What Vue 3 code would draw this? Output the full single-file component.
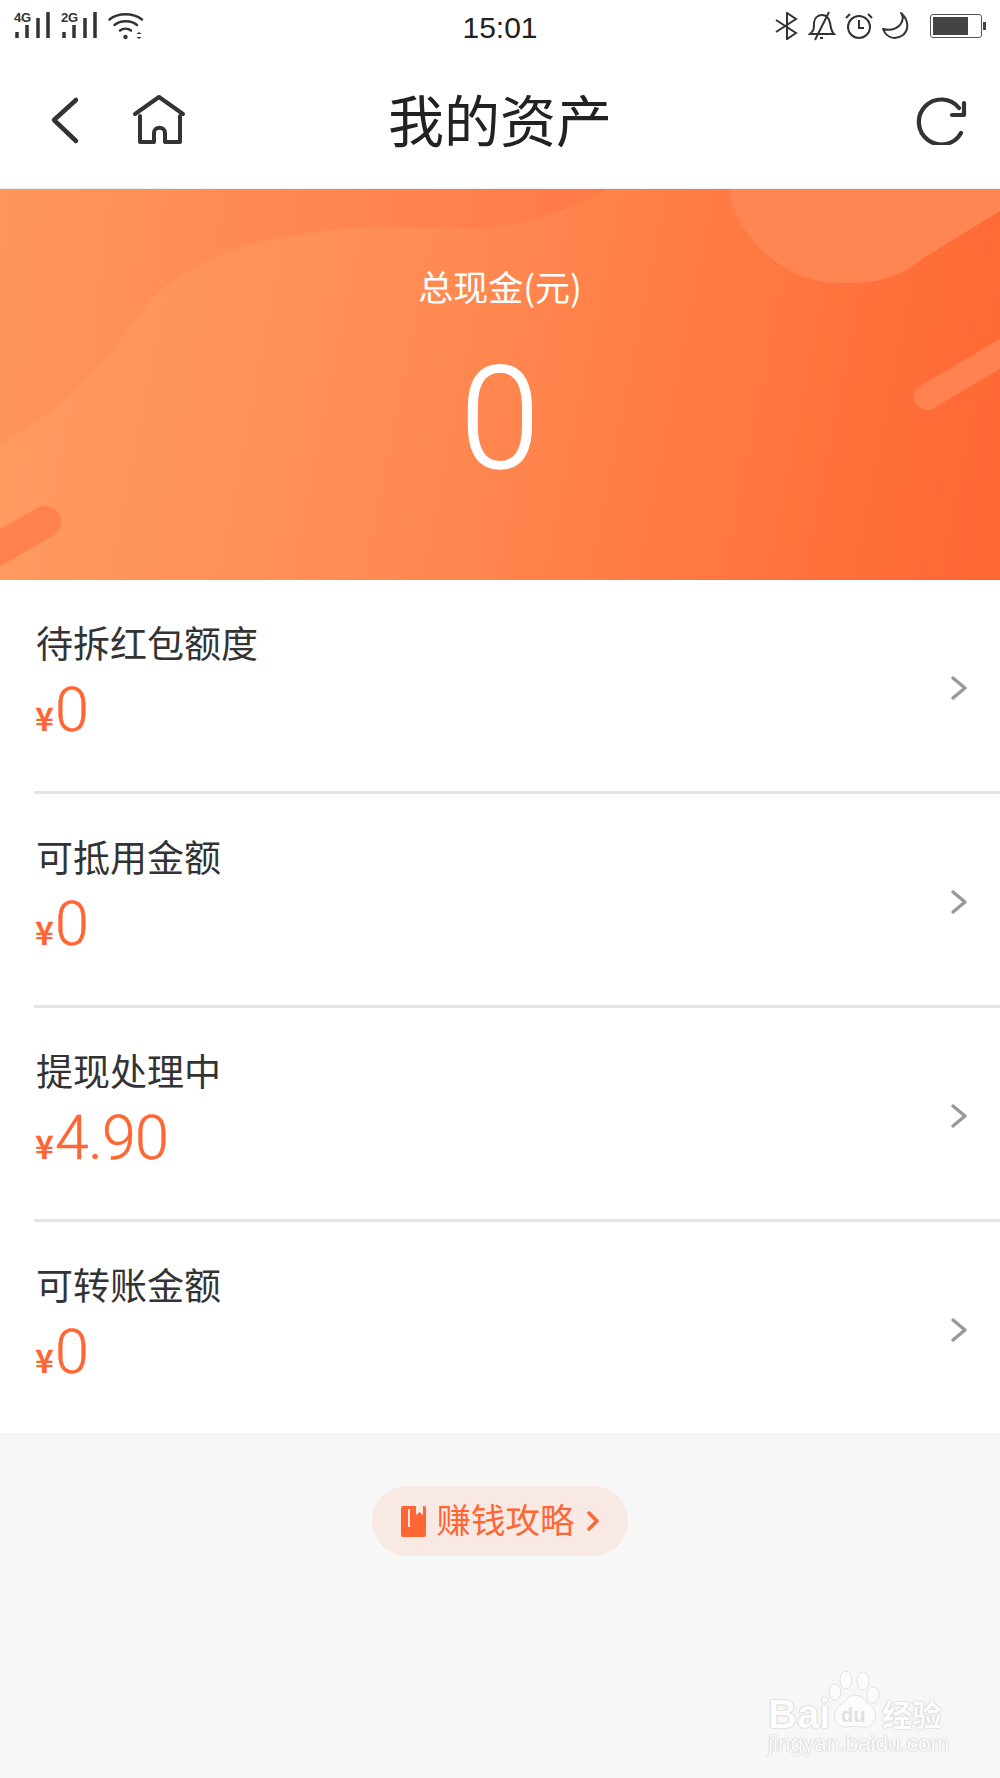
<script setup>
const rows = [
  { label: '待拆红包额度', value: '0' },
  { label: '可抵用金额', value: '0' },
  { label: '提现处理中', value: '4.90' },
  { label: '可转账金额', value: '0' }
]
</script>

<template>
  <div class="page">
    <div class="status">
      <div class="status-left">
        <div class="signal"><span class="net">4G</span><svg width="36" height="26" viewBox="0 0 36 26"><path d="M3 20v6M13 13v13M24 6v20M34 0v26" class="bars" /></svg></div>
        <div class="signal"><span class="net">2G</span><svg width="36" height="26" viewBox="0 0 36 26"><path d="M3 20v6M13 13v13M24 6v20M34 0v26" class="bars" /></svg></div>
        <svg class="wifi" width="36" height="28" viewBox="0 0 36 28" fill="none" stroke="#333" stroke-width="2.400" stroke-linecap="round">
          <path d="M1.500 7.500C10 .5 25 .5 34 7.500" />
          <path d="M6.500 13C12.500 8 23 8 29 13" />
          <path d="M12 18.500C15 16 20 16 23 18.500" />
          <circle cx="17.500" cy="25" r="2.200" fill="#333" stroke="none" />
          <path d="M28.500 22l2.500-2 2.500 2zM28.500 25l2.500 2 2.500-2z" fill="#333" stroke="none" />
        </svg>
      </div>
      <div class="time">15:01</div>
      <div class="status-right">
        <svg width="24" height="28" viewBox="0 0 24 28" fill="none" stroke="#333" stroke-width="2"><path d="M1 8l20 13-9 6V1l9 6L1 20" /></svg>
        <svg width="28" height="30" viewBox="0 0 28 30" fill="none" stroke="#333" stroke-width="2"><path d="M2 23c4-3 4-6 4-11 0-5 4-8 8-8s7 3 8 8c1 5 1 8 4 11zM7 29L21 1" /><path d="M12 27h3" /></svg>
        <svg width="28" height="28" viewBox="0 0 28 28" fill="none" stroke="#333" stroke-width="2"><circle cx="14" cy="15" r="11" /><path d="M14 8v8h5M1 6l4-4M27 6l-4-4" /></svg>
        <svg width="28" height="28" viewBox="0 0 28 28" fill="none" stroke="#333" stroke-width="2" stroke-linejoin="round"><path d="M19 1C27 8 27 18 21 23 14 28 5 27 1 17 8 19 14 17 18 13 21 9 22 5 19 1z" /></svg>
        <div class="battery"><div class="battery-body"><div class="battery-fill"></div></div><div class="battery-cap"></div></div>
      </div>
    </div>

    <header class="nav">
      <div class="nav-left">
        <svg width="32" height="50" viewBox="0 0 32 50" fill="none" stroke="#333" stroke-width="4.500" stroke-linecap="round" stroke-linejoin="round"><path d="M26 5L4 25l22 21" /></svg>
        <svg width="56" height="52" viewBox="0 0 56 52" fill="none" stroke="#333" stroke-width="4" stroke-linecap="round" stroke-linejoin="round"><path d="M3 20L27 3l24 17" /><path d="M8 22v26h14v-9c0-7 11-7 11 0v9h15V22" /></svg>
      </div>
      <h1 class="title">我的资产</h1>
      <svg class="refresh" width="52" height="50" viewBox="0 0 52 50" fill="none" stroke="#333" stroke-width="4.200" stroke-linecap="round" stroke-linejoin="round"><path d="M45 38A22.500 22.500 0 1 1 43 13" /><path d="M48 8v12H36" /></svg>
    </header>

    <section class="hero">
      <svg class="hero-art" viewBox="0 0 1000 391" preserveAspectRatio="none">
        <defs>
          <linearGradient id="heroBase" x1="0" y1="0" x2="1000" y2="100" gradientUnits="userSpaceOnUse">
            <stop offset="0" stop-color="#ff965c" />
            <stop offset="0.6" stop-color="#ff7a48" />
            <stop offset="1" stop-color="#ff6733" />
          </linearGradient>
          <linearGradient id="heroBlob" x1="0" y1="100" x2="1000" y2="300" gradientUnits="userSpaceOnUse">
            <stop offset="0" stop-color="#ff9c61" />
            <stop offset="0.4" stop-color="#ff8c54" />
            <stop offset="1" stop-color="#ff6733" />
          </linearGradient>
        </defs>
        <rect width="1000" height="391" fill="url(#heroBase)" />
        <path d="M0 256C30 236 50 225 64 211C90 185 110 165 128 141C148 110 165 95 191 81C225 62 260 52 287 48C320 42 350 38 383 38C420 38 450 40 478 39C505 37 525 33 542 28C565 20 590 12 606 0H1000V391H0Z" fill="url(#heroBlob)" />
        <path d="M729 0C735 41 765 70 797 85 815 93 830 94 845 94 865 94 880 92 893 87 905 83 912 78 925 68L1000 22V0Z" fill="#ff8652" />
        <path d="M1020 153L927 208" fill="none" stroke="#ff8250" stroke-width="26" stroke-linecap="round" />
        <path d="M-20 370L45 333" fill="none" stroke="#ff824d" stroke-width="32" stroke-linecap="round" />
      </svg>
      <div class="hero-label">总现金(元)</div>
      <div class="hero-value">0</div>
    </section>

    <ul class="list">
      <li v-for="row in rows" :key="row.label" class="row">
        <div class="row-text">
          <div class="row-label">{{ row.label }}</div>
          <div class="row-value"><span class="yen">¥</span>{{ row.value }}</div>
        </div>
        <svg class="chevron" width="18" height="26" viewBox="0 0 18 26" fill="none" stroke="#999" stroke-width="3.500" stroke-linecap="round" stroke-linejoin="round"><path d="M3 3l12 10L3 23" /></svg>
      </li>
    </ul>

    <div class="footer">
      <div class="pill">
        <svg width="25" height="31" viewBox="0 0 25 31"><path fill-rule="evenodd" d="M2 0H15v9l3.500-3 3.500 3V0h1a2 2 0 0 1 2 2v27a2 2 0 0 1-2 2H2a2 2 0 0 1-2-2V2a2 2 0 0 1 2-2zM7 3v18h2V3z" fill="#ff6633" /></svg>
        <span class="pill-text">赚钱攻略</span>
        <svg width="14" height="22" viewBox="0 0 14 22" fill="none" stroke="#ff6633" stroke-width="3.500" stroke-linecap="round" stroke-linejoin="round"><path d="M3 3l8 8-8 8" /></svg>
      </div>
      <div class="mark">
        <div class="mark-top">
          <span class="mark-bai">Bai</span>
          <div class="paw">
            <svg width="52" height="58" viewBox="0 0 52 58" fill="#fcfcfc" stroke="#e2e2e2" stroke-width="1"><ellipse cx="7" cy="22" rx="6" ry="8" /><ellipse cx="18" cy="10" rx="6" ry="9" /><ellipse cx="35" cy="11" rx="6" ry="9" /><ellipse cx="45" cy="25" rx="6" ry="8" /><path d="M27 25c7 0 9 6 15 10 9 6 7 22-7 22-3 0-5-1-8-1s-5 1-8 1C5 57 3 42 12 35c6-4 8-10 15-10z" /></svg>
            <span class="du">du</span>
          </div>
          <span class="mark-cn">经验</span>
        </div>
        <div class="mark-url">jingyan.baidu.com</div>
      </div>
    </div>
  </div>
</template>

<style>
html, body { margin: 0; background: #f7f7f7; }
</style>

<style scoped>
.page {
  width: 1000px;
  height: 1778px;
  overflow: hidden;
  background: #f7f7f7;
  font-family: "Noto Sans CJK SC", "Noto Sans", sans-serif;
  color: #333;
}
.status {
  height: 52px;
  background: #fff;
  display: grid;
  grid-template-columns: 1fr auto 1fr;
  align-items: center;
  padding: 0 14px;
  box-sizing: border-box;
}
.status-left { display: flex; align-items: center; gap: 11px; }
.signal { position: relative; width: 36px; height: 28px; margin-top: -1px; }
.signal svg { position: absolute; left: 0; top: 0; }
.net {
  position: absolute;
  left: 0;
  top: -1px;
  z-index: 1;
  font: 700 13px/14px "Liberation Sans", sans-serif;
  letter-spacing: -0.300px;
  color: #333;
}
.bars { fill: none; stroke: #333; stroke-width: 3.500; }
.wifi { margin-top: -1px; }
.time {
  font: 400 30px/36px "Liberation Sans", sans-serif;
  color: #222;
  margin-top: 4px;
}
.status-right { display: flex; align-items: center; justify-content: flex-end; gap: 9px; }
.battery { display: flex; align-items: center; margin-left: 11px; }
.battery-body {
  width: 52px;
  height: 24px;
  box-sizing: border-box;
  border: 1.500px solid #555;
  border-radius: 3px;
  padding: 2px;
}
.battery-fill { width: 35px; height: 100%; background: #444; }
.battery-cap { width: 3px; height: 8px; background: #444; margin-left: 1px; }
.nav {
  height: 137px;
  background: #fff;
  display: grid;
  grid-template-columns: 1fr auto 1fr;
  align-items: center;
  padding: 0 32px;
  box-sizing: border-box;
  border-bottom: 1px solid #eee;
}
.nav-left { display: flex; align-items: center; gap: 50px; padding-left: 18px; }
.title { margin: 0; font-size: 56px; line-height: 70px; font-weight: 400; color: #222; margin-top: -4px; }
.refresh { justify-self: end; }
.hero {
  position: relative;
  height: 391px;
  overflow: hidden;
  display: flex;
  flex-direction: column;
  align-items: center;
  color: #fff;
}
.hero-art { position: absolute; inset: 0; width: 100%; height: 100%; }
.hero-label, .hero-value { position: relative; }
.hero-label {
  font-size: 35px;
  line-height: 44px;
  margin-top: 75px;
  color: #fff;
}
.hero-value {
  font: 300 143px/170px Roboto, "Liberation Sans", sans-serif;
  -webkit-text-stroke: 1.500px #fff;
  margin-top: 26px;
}
.list { margin: 0; padding: 0; list-style: none; background: #fff; }
.row {
  height: 214px;
  margin-left: 34px;
  padding-right: 32px;
  box-sizing: border-box;
  display: flex;
  align-items: center;
  justify-content: space-between;
  border-bottom: 3px solid #e4e4e4;
}
.row:last-child { border-bottom: 0; height: 211px; }
.row-text { margin-top: -8px; margin-left: 2px; }
.row-label { font-size: 37px; line-height: 50px; color: #333; }
.row-value {
  font: 300 61px/72px Roboto, "Liberation Sans", sans-serif;
  letter-spacing: -0.800px;
  -webkit-text-stroke: 0.400px #ff6633;
  color: #ff6633;
  margin-top: 7px;
  margin-left: -1px;
}
.yen { font: 700 32px/1 "Noto Sans CJK SC", sans-serif; margin-right: 2px; -webkit-text-stroke: 0; }
.chevron { margin-top: 4px; }
.footer { position: relative; height: 345px; display: flex; justify-content: center; }
.pill {
  margin-top: 53px;
  height: 70px;
  width: 256px;
  box-sizing: border-box;
  border-radius: 35px;
  background: #f9e9e4;
  display: flex;
  align-items: center;
  justify-content: center;
  gap: 11px;
}
.pill-text { font-size: 34.500px; line-height: 44px; color: #ff6633; margin-top: -6px; }
.mark { position: absolute; left: 768px; top: 237px; width: 180px; color: #fdfdfd; }
.mark-top { display: flex; align-items: flex-end; height: 58px; }
.mark-bai {
  width: 60px;
  flex: none;
  font: 700 40px/32px "Liberation Sans", sans-serif;
  margin-bottom: -2px;
  text-shadow: 0 0 1px #bbb, 0 0 2px #ccc;
}
.paw { position: relative; width: 52px; height: 58px; flex: none; }
.paw svg { display: block; }
.du {
  position: absolute;
  left: 13px;
  top: 33px;
  font: 700 20px/24px "Liberation Sans", sans-serif;
  color: #e0e0e0;
}
.mark-cn {
  font-size: 30px;
  line-height: 32px;
  font-weight: 700;
  white-space: nowrap;
  margin-left: 2px;
  margin-bottom: -1px;
  text-shadow: 0 0 1px #bbb, 0 0 2px #ccc;
}
.mark-url {
  font: 400 22.500px/24px "Liberation Sans", sans-serif;
  white-space: nowrap;
  margin-top: 4px;
  text-shadow: 0 0 1px #bbb, 0 0 2px #ccc;
}
</style>
